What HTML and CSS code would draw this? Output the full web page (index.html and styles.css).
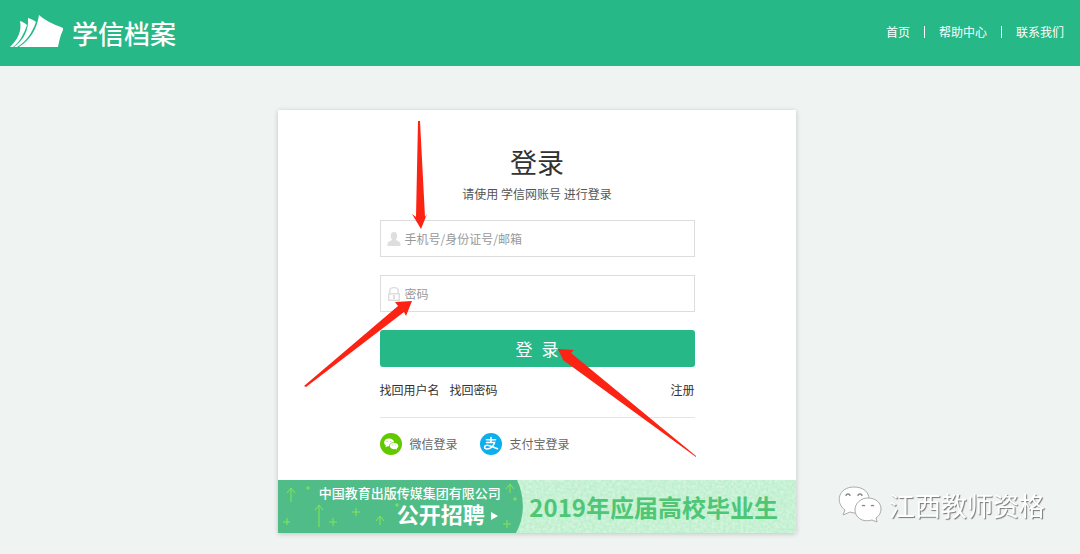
FILE: index.html
```html
<!DOCTYPE html>
<html lang="zh-CN">
<head>
    <meta charset="utf-8">
    <title>学信档案 - 登录</title>
    <link rel="stylesheet" href="styles.css">
</head>
<body>
    <header class="header">
        <a class="logo" href="#">
            <svg class="logo-mark" viewBox="0 0 54 34" aria-hidden="true">
                <path d="M29 0 C37 7 46 10 53 13 L53 15 C50 21 49 27 48 32 L9 32 C20 25 27 14 29 0Z"/>
                <path d="M18 3 C21 4 24 5 26 7 C22 18 16 27 7 32 L4 32 C14 25 19 14 18 3Z"/>
                <path d="M10 6 C13 7 15 8 17 10 C14 19 9 28 3 32 L0 32 C8 24 12 16 10 6Z"/>
            </svg>
            <span class="logo-text">学信档案</span>
        </a>
        <nav class="nav">
            <a href="#">首页</a>
            <a href="#">帮助中心</a>
            <a href="#">联系我们</a>
        </nav>
    </header>

    <main class="main">
        <div class="card">
            <form class="login">
                <h1>登录</h1>
                <p class="tip">请使用 学信网账号 进行登录</p>

                <div class="field">
                    <label for="username" aria-label="用户名">
                        <svg viewBox="0 0 14 14"><path d="M7 0 C9.500 0 10.500 2 10.200 4.500 C10 6.300 9.300 7 9 7.500 C9 9 13.500 9 13.500 12 L13.500 14 L0.500 14 L0.500 12 C0.500 9 5 9 5 7.500 C4.700 7 4 6.300 3.800 4.500 C3.500 2 4.500 0 7 0Z"/></svg>
                    </label>
                    <input type="text" id="username" placeholder="手机号/身份证号/邮箱">
                </div>
                <div class="field">
                    <label for="password" aria-label="密码">
                        <svg viewBox="0 0 14 14"><path fill-rule="evenodd" d="M2 6 V4 C2 1 4 0 7 0 C10 0 12 1 12 4 V6 H13 V14 H1 V6Z M3.500 6 H10.500 V4 C10.500 2 9 1.300 7 1.300 C5 1.300 3.500 2 3.500 4Z M2.500 7.500 V12.500 H11.500 V7.500Z"/><path d="M6 8 H8 V12 H6Z"/></svg>
                    </label>
                    <input type="password" id="password" placeholder="密码">
                </div>
                <button type="submit" class="submit"><span>登</span><span>录</span></button>

                <div class="links">
                    <a href="#">找回用户名</a>
                    <a href="#">找回密码</a>
                    <a href="#" class="register">注册</a>
                </div>
                <div class="social">
                    <a href="#">
                        <svg viewBox="0 0 22 22" aria-hidden="true">
                            <circle cx="11" cy="11" r="11" fill="#62c900"/>
                            <path fill="#fff" d="M9 5.500 C12 5.500 14 7.300 14 9.300 C11 9.300 9 11 9.300 13.300 L7.500 13.200 L5.500 14.200 L5.800 12.500 C3 10.500 3.700 5.500 9 5.500Z"/>
                            <path fill="#fff" d="M13.500 9.800 C19 9.800 19.500 14 16.700 15.400 L17 16.800 L15.300 16 C11.500 16.700 9.800 14.700 9.800 13 C9.800 11.200 11.300 9.800 13.500 9.800Z"/>
                            <g fill="#62c900"><circle cx="7.200" cy="8.300" r=".5"/><circle cx="10.800" cy="8.300" r=".5"/><circle cx="12.300" cy="12" r=".4"/><circle cx="15.300" cy="12" r=".4"/></g>
                        </svg>
                        微信登录
                    </a>
                    <a href="#">
                        <svg viewBox="0 0 22 22" aria-hidden="true">
                            <circle cx="11" cy="11" r="11" fill="#0cafed"/>
                            <path fill="none" stroke="#fff" stroke-width="1.600" stroke-linecap="round" d="M6.500 6.800 H15.500 M11 4.500 V9.500 M6.500 9.500 H14.500 C13.500 13 10.500 16 7 16 C3.500 16 4 12.200 7.200 12.200 C10.500 12.200 13 14.300 17.500 15.800"/>
                        </svg>
                        支付宝登录
                    </a>
                </div>
            </form>

            <a class="banner" href="#">
                <svg class="banner-art" viewBox="0 0 518 53" preserveAspectRatio="none" aria-hidden="true">
                    <filter id="grain" x="0" y="0" width="100%" height="100%">
                        <feTurbulence type="fractalNoise" baseFrequency=".35" numOctaves="2" seed="3"/>
                        <feColorMatrix values="0 0 0 0 1  0 0 0 0 1  0 0 0 0 1  .8 0 0 0 -.25"/>
                    </filter>
                    <rect width="518" height="53" fill="#bdefcc"/>
                    <rect width="518" height="53" filter="url(#grain)"/>
                    <path fill="#50bd88" d="M0 0 H239 C247 17 247 37 238 53 H0Z"/>
                    <g fill="none" stroke="#83e656" stroke-width="1">
                        <path d="M13 22 V9 M9 13 L13 8 L17 13 M41 47 V26 M37 30 L41 25 L45 30 M102 45 V37 M98 41 L102 36 L106 41 M232 13 V5 M228 9 L232 4 L236 9"/>
                        <path d="M30 6 V10 M28 8 H32 M9 38 V45 M5 42 H12 M55 38 V46 M51 42 H59 M78 28 V36 M74 32 H82 M119 23 V27 M117 25 H121 M229 40 V48 M225 44 H233 M237 17 V21 M235 19 H239"/>
                    </g>
                </svg>
                <span class="banner-left">
                    <span class="company">中国教育出版传媒集团有限公司</span>
                    <strong class="hiring">公开招聘</strong>
                </span>
                <strong class="banner-right">2019年应届高校毕业生</strong>
            </a>

            <!-- step pointers -->
            <svg class="arrows" viewBox="0 0 518 423" aria-hidden="true">
                <path d="M140 11 L142 11 L147 107 L149 104 L143 119 L134 104 L138 107Z"/>
                <path d="M26 276 L120 196 L117 192 L134 191 L128 206 L126 202 L28 277Z"/>
                <path d="M418 347 L285 250 L287 254 L280 239 L296 240 L293 243 L418 346Z"/>
            </svg>
        </div>
    </main>

    <div class="watermark">
        <svg viewBox="0 0 44 38" aria-hidden="true">
            <g fill="#fff" stroke="#aaa" stroke-width="1">
                <path d="M16 1 C25 1 31 6 31 13 C31 21 25 27 16 27 L12 26 L5 29 L7 24 C-3 17 0 1 16 1Z"/>
                <path d="M30 12 C38 12 43 17 43 23 C43 27 41 30 38 32 L39 36 L34 34 C24 37 17 31 17 24 C17 17 23 12 30 12Z"/>
            </g>
            <path fill="none" stroke="#888" stroke-width="1.300" d="M8 10 A2 2 0 0 1 12 10 M20 10 A2 2 0 0 1 24 10 M24 20 A2 2 0 0 1 27 20 M33 20 A2 2 0 0 1 36 20"/>
        </svg>
        <span>江西教师资格</span>
    </div>
</body>
</html>
```
FILE: styles.css
```css
* { box-sizing: border-box; }
body { margin: 0; min-height: 100vh; background: #eff3f2; color: #333; font: 12px/18px "Noto Sans CJK SC", sans-serif; }
a { color: inherit; text-decoration: none; }

.header { display: flex; justify-content: space-between; height: 66px; padding: 0 16px 2px 10px; background: #26b887; color: #fff; }
.logo { display: flex; align-items: center; gap: 8px; }
.logo-mark { width: 54px; height: 34px; fill: #fff; }
.logo-text { font-size: 26px; line-height: 34px; font-weight: 500; padding-top: 2px; }
.nav { display: flex; align-items: center; }
.nav a { line-height: 12px; }
.nav a + a { margin-left: 14px; padding-left: 14px; border-left: 1px solid #fff; }

.main { padding: 44px 6px 20px 0; }
.card { position: relative; width: 100%; max-width: 518px; margin: 0 auto; background: #fff; box-shadow: 0 1px 5px rgba(0,0,0,0.2); }
.login { max-width: 315px; margin: 0 auto; padding: 34px 0 25px; }
h1 { margin: 0; font-size: 27px; line-height: 36px; font-weight: 400; text-align: center; }
.tip { margin: 5px 0 17px; text-align: center; color: #555; }

.field { display: flex; align-items: center; height: 37px; margin-bottom: 18px; padding-left: 6px; border: 1px solid #ddd; }
.field label { display: flex; }
.field svg { width: 14px; height: 14px; fill: #dedede; }
.field input { flex: 1; min-width: 0; height: 35px; padding: 0 4px; border: 0; outline: 0; background: none; font: inherit; color: #333; }
.field input::placeholder { color: #999; opacity: 1; }
.submit { display: flex; justify-content: center; align-items: center; gap: 9px; width: 100%; height: 37px; padding: 0; border: 0; border-radius: 3px; background: #26b887; color: #fff; font: 17px/24px "Noto Sans CJK SC", sans-serif; }

.links { display: flex; gap: 10px; padding: 14px 0 18px; border-bottom: 1px solid #e5e5e5; }
.register { margin-left: auto; }
.social { display: flex; gap: 22px; padding-top: 15px; color: #666; }
.social a { display: flex; align-items: center; gap: 8px; }
.social svg { width: 22px; height: 22px; }

.banner { position: relative; display: flex; height: 53px; overflow: hidden; }
.banner-art { position: absolute; width: 100%; height: 100%; }
.banner-left { position: relative; width: 43%; padding-top: 5px; color: #fff; font-family: "Liberation Sans", "Noto Sans CJK SC", sans-serif; text-align: right; }
.company { display: block; font-size: 13px; line-height: 18px; font-weight: 500; white-space: nowrap; }
.hiring { display: flex; justify-content: flex-end; align-items: center; gap: 6px; padding-right: 3px; font-size: 22px; line-height: 25px; }
.hiring::after { content: ""; border: 4px solid transparent; border-left: 7px solid #fff; border-right: 0; }
.banner-right { position: relative; flex: 1; padding-right: 18px; color: #4fc675; font-size: 24px; line-height: 53px; text-align: right; white-space: nowrap; }

.arrows { position: absolute; top: 0; left: 0; width: 100%; fill: #fb2314; pointer-events: none; }

.watermark { position: fixed; right: 35px; bottom: 30px; display: flex; align-items: center; gap: 7px; color: #fff; font-size: 26px; line-height: 38px; text-shadow: 1px 1px 1px #777; }
.watermark svg { width: 44px; height: 38px; }
```
